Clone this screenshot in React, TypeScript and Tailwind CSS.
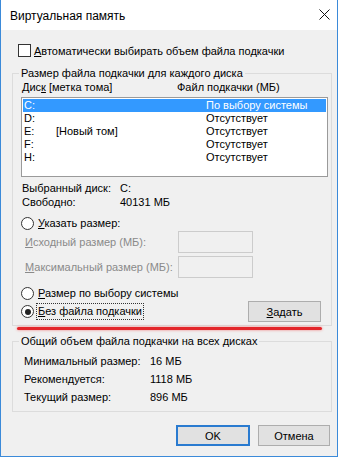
import React from "react";

const font = { fontFamily: '"Liberation Sans", Arial, sans-serif' };

const drives = [
  { d: "C:", label: "", size: "По выбору системы", sel: true },
  { d: "D:", label: "", size: "Отсутствует" },
  { d: "E:", label: "[Новый том]", size: "Отсутствует" },
  { d: "F:", label: "", size: "Отсутствует" },
  { d: "H:", label: "", size: "Отсутствует" },
];

const Radio = ({ checked }: { checked?: boolean }) => (
  <span className="w-[13px] h-[13px] rounded-full border border-[#333] bg-white flex items-center justify-center shrink-0">
    {checked && <span className="w-[6px] h-[6px] rounded-full bg-[#222]" />}
  </span>
);

const Button = ({ children, primary }: { children: React.ReactNode; primary?: boolean }) => (
  <div
    className={`h-[21px] flex items-center justify-center bg-[#e1e1e1] ${
      primary ? "border-2 border-[#2a7bd0]" : "border border-[#adadad]"
    }`}
  >
    {children}
  </div>
);

export default function App() {
  return (
    <div
      className="w-[340px] h-[458px] bg-white text-[11px] leading-[14px] text-black whitespace-nowrap"
      style={font}
    >
      <div className="w-[338px] h-[457px] border-x border-b border-[#3b8ad9] flex flex-col">
        {/* title bar */}
        <div className="h-[30px] bg-white flex items-center pl-[9px] pr-[7px] shrink-0 text-[12px]">
          <span className="flex-1 pt-[1px]">Виртуальная память</span>
          <svg width="11" height="11" viewBox="0 0 11 11" className="mb-[1px]">
            <path d="M0.5 0.5 L10.5 10.5 M10.5 0.5 L0.5 10.5" stroke="#111" strokeWidth="1" />
          </svg>
        </div>

        <div className="flex-1 bg-[#f0f0f0] flex flex-col">
          {/* auto checkbox */}
          <div className="mt-[14px] ml-[17px] h-[13px] flex items-center gap-[3px]">
            <span className="w-[13px] h-[13px] border border-[#333] bg-white shrink-0" />
            <span>
              <u>А</u>втоматически выбирать объем файла подкачки
            </span>
          </div>

          {/* per-disk group */}
          <fieldset className="mt-[9px] ml-[11px] w-[320px] border border-[#dcdcdc] pl-[9px] pr-[2px] pb-[3px]">
            <legend className="-ml-[3px] px-[2px] h-[14px]">Размер файла подкачки для каждого диска</legend>
            <div className="flex h-[14px]">
              <span className="w-[155px]">
                Дис<u>к</u> [метка тома]
              </span>
              <span>Файл подкачки (МБ)</span>
            </div>
            <div className="mt-[3px] -ml-[1px] w-[307px] h-[80px] border border-[#9a9a9a] bg-white p-px">
              {drives.map((r) => (
                <div
                  key={r.d}
                  className={`h-[13px] leading-[13px] flex pl-[1px] ${r.sel ? "bg-[#3399ff] text-white" : ""}`}
                >
                  <span className="w-[32px]">{r.d}</span>
                  <span className="w-[150px]">{r.label}</span>
                  <span>{r.size}</span>
                </div>
              ))}
            </div>

            <div className="mt-[4px] flex h-[14px]">
              <span className="w-[98px]">Выбранный диск:</span>
              <span>C:</span>
            </div>
            <div className="flex h-[14px]">
              <span className="w-[98px]">Свободно:</span>
              <span>40131 МБ</span>
            </div>

            <div className="mt-[7px] h-[14px] flex items-center gap-[4px] -ml-[1px]">
              <Radio />
              <span>
                <u>У</u>казать размер:
              </span>
            </div>
            <div className="mt-[1px] h-[22px] flex items-center text-[#8a8a8a]">
              <span className="ml-[3px] w-[153px]">
                <u>И</u>сходный размер (МБ):
              </span>
              <span className="w-[75px] h-[22px] border border-[#cccccc] bg-[#f0f0f0]" />
            </div>
            <div className="mt-[3px] h-[22px] flex items-center text-[#8a8a8a]">
              <span className="ml-[3px] w-[153px]">
                <u>М</u>аксимальный размер (МБ):
              </span>
              <span className="w-[75px] h-[22px] border border-[#cccccc] bg-[#f0f0f0]" />
            </div>

            <div className="mt-[8px] h-[14px] flex items-center gap-[4px] -ml-[1px]">
              <Radio />
              <span>
                <u>Р</u>азмер по выбору системы
              </span>
            </div>
            <div className="mt-[1px] h-[21px] flex items-center -ml-[1px]">
              <Radio checked />
              <span className="ml-[2px] px-[1px] border border-dotted border-[#333] leading-[15px]">
                <u>Б</u>ез файла подкачки
              </span>
              <span className="flex-1" />
              <div className="w-[73px] mr-[8px]">
                <Button>
                  <u>З</u>адать
                </Button>
              </div>
            </div>
          </fieldset>

          {/* red annotation line */}
          <div className="mt-[1px] ml-[16px] w-[305px] h-[3px] bg-[#e3262b] rounded-full shadow-[0_0_3px_#f08080]" />

          {/* total group */}
          <fieldset className="mt-[4px] ml-[11px] w-[320px] border border-[#dcdcdc] pl-[11px] pb-[5px]">
            <legend className="-ml-[5px] px-[2px] h-[14px]">Общий объем файла подкачки на всех дисках</legend>
            <div className="mt-[4px]">
              {[
                ["Минимальный размер:", "16 МБ"],
                ["Рекомендуется:", "1118 МБ"],
                ["Текущий размер:", "896 МБ"],
              ].map(([k, v]) => (
                <div key={k} className="h-[18px] flex items-center">
                  <span className="w-[126px]">{k}</span>
                  <span>{v}</span>
                </div>
              ))}
            </div>
          </fieldset>

          <div className="mt-[13px] mr-[7px] flex justify-end gap-[8px]">
            <div className="w-[74px]">
              <Button primary>OK</Button>
            </div>
            <div className="w-[72px]">
              <Button>Отмена</Button>
            </div>
          </div>
        </div>
      </div>
    </div>
  );
}
